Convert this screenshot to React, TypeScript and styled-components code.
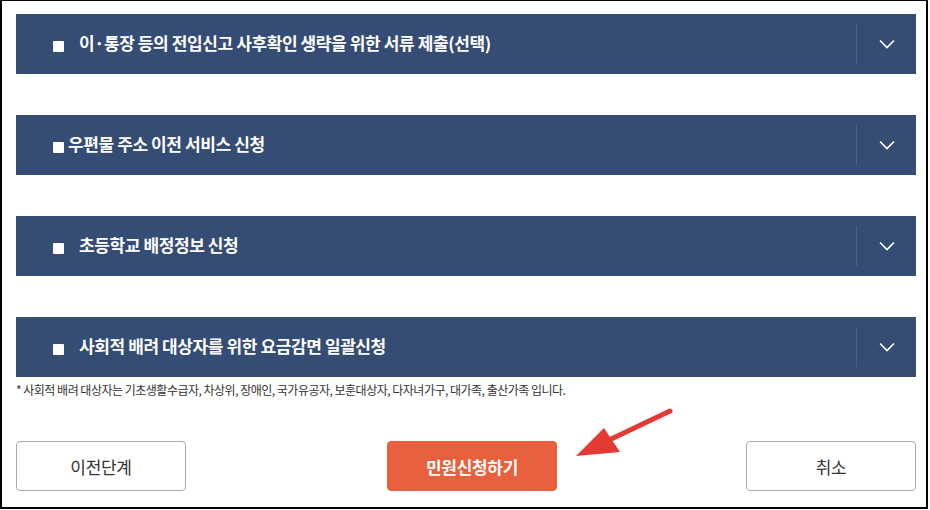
import React from "react";
import styled, { createGlobalStyle } from "styled-components";

const Global = createGlobalStyle`
  html, body { margin: 0; padding: 0; background: #fff; }
  body { font-family: "Noto Sans CJK KR", "Noto Sans", sans-serif; }
`;

const Frame = styled.div`
  position: relative;
  box-sizing: border-box;
  width: 928px;
  height: 509px;
  border: 2px solid #000;
  border-top-width: 1px;
  padding: 13px 10px 0 14px;
  display: flex;
  flex-direction: column;
`;

const List = styled.div`
  display: flex;
  flex-direction: column;
  gap: 41px;
`;

const Panel = styled.div`
  height: 60px;
  background: #354c74;
  display: flex;
  align-items: center;
`;

const Title = styled.div<{ $tight?: boolean }>`
  flex: 1;
  display: flex;
  align-items: center;
  padding-left: 37px;
  padding-bottom: 3px;
  gap: ${(p) => (p.$tight ? "4px" : "15px")};
  color: #fff;
  font-size: 17px;
  font-weight: 700;
  letter-spacing: -0.4px;
`;

const Box = styled.span`
  width: 11px;
  height: 11px;
  background: #fff;
  border-radius: 1px;
  margin-top: 8px;
  flex: none;
`;

const Toggle = styled.div`
  width: 59px;
  height: 40px;
  border-left: 1px solid #4b6189;
  display: flex;
  align-items: center;
  justify-content: center;
`;

const Note = styled.div`
  margin-top: 5px;
  font-size: 12px;
  color: #333;
  letter-spacing: -0.5px;
  line-height: 16px;
`;

const Buttons = styled.div`
  width: 900px;
  margin-top: 43px;
  display: flex;
`;

const Btn = styled.button<{ $primary?: boolean }>`
  width: 170px;
  height: 50px;
  box-sizing: border-box;
  border-radius: 4px;
  border: 1px solid ${(p) => (p.$primary ? "#e8603e" : "#aaa")};
  background: ${(p) => (p.$primary ? "#e8603e" : "#fff")};
  color: ${(p) => (p.$primary ? "#fff" : "#333")};
  font-family: "Noto Sans CJK KR", "Noto Sans", sans-serif;
  font-size: 17px;
  font-weight: ${(p) => (p.$primary ? 700 : 400)};
  letter-spacing: -0.3px;
  padding: 0;
  margin-left: ${(p) => (p.$primary ? "201px" : "0")};
  &:last-child { margin-left: auto; }
`;

const Arrow = styled.svg`
  position: absolute;
  left: 560px;
  top: 398px;
`;

const Chevron = () => (
  <svg width="16" height="10" viewBox="0 0 16 10">
    <polyline points="1,1.5 8,8.5 15,1.5" fill="none" stroke="#fff" strokeWidth="1.6" />
  </svg>
);

const items = [
  { t: "이·통장 등의 전입신고 사후확인 생략을 위한 서류 제출(선택)" },
  { t: "우편물 주소 이전 서비스 신청", tight: true },
  { t: "초등학교 배정정보 신청" },
  { t: "사회적 배려 대상자를 위한 요금감면 일괄신청" },
];

export default function App() {
  return (
    <>
      <Global />
      <Frame>
        <List>
          {items.map((it) => (
            <Panel key={it.t}>
              <Title $tight={it.tight}>
                <Box />
                <span>{it.t}</span>
              </Title>
              <Toggle>
                <Chevron />
              </Toggle>
            </Panel>
          ))}
        </List>
        <Note>
          * 사회적 배려 대상자는 기초생활수급자, 차상위, 장애인, 국가유공자, 보훈대상자, 다자녀가구, 대가족, 출산가족 입니다.
        </Note>
        <Buttons>
          <Btn>이전단계</Btn>
          <Btn $primary>민원신청하기</Btn>
          <Btn>취소</Btn>
        </Buttons>
        <Arrow width="120" height="70" viewBox="0 0 120 70">
          <line x1="108" y1="12" x2="45" y2="42" stroke="#e53935" strokeWidth="5" strokeLinecap="round" />
          <polygon points="14,57 42,29 58,53" fill="#e53935" />
        </Arrow>
      </Frame>
    </>
  );
}
